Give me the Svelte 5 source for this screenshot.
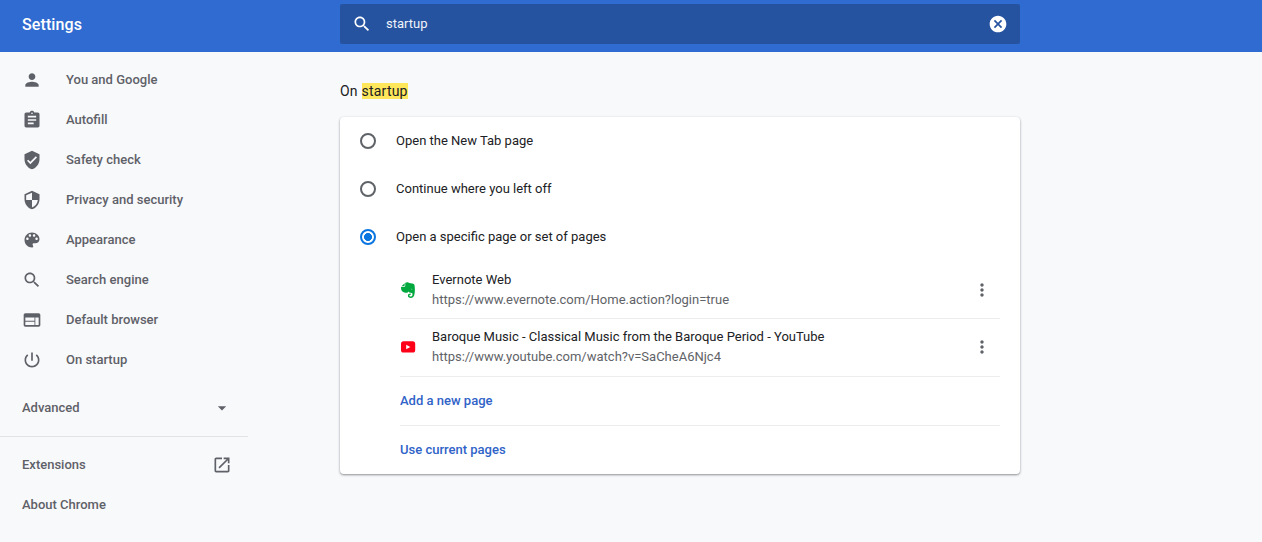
<script>
  const menu = [
    { label: 'You and Google', d: 'M12 12c2.21 0 4-1.79 4-4s-1.79-4-4-4-4 1.79-4 4 1.79 4 4 4zm0 2c-2.67 0-8 1.34-8 4v2h16v-2c0-2.66-5.33-4-8-4z' },
    { label: 'Autofill', d: 'M19 3h-4.18C14.4 1.84 13.3 1 12 1c-1.3 0-2.4.84-2.82 2H5c-1.1 0-2 .9-2 2v14c0 1.1.9 2 2 2h14c1.1 0 2-.9 2-2V5c0-1.100-.9-2-2-2zm-7 0c.55 0 1 .45 1 1s-.45 1-1 1-1-.45-1-1 .45-1 1-1zm2 14H7v-2h7v2zm3-4H7v-2h10v2zm0-4H7V7h10v2z' },
    { label: 'Safety check', d: 'M12 1L3 5v6c0 5.550 3.840 10.740 9 12 5.160-1.260 9-6.450 9-12V5l-9-4zm-2 16l-4-4 1.410-1.410L10 14.170l6.590-6.590L18 9l-8 8z' },
    { label: 'Privacy and security', d: 'M12 1L3 5v6c0 5.550 3.840 10.740 9 12 5.160-1.260 9-6.450 9-12V5l-9-4zm0 10.990h7c-.53 4.120-3.280 7.790-7 8.940V12H5V6.300l7-3.110v8.800z' },
    { label: 'Appearance', d: 'M12 3c-4.970 0-9 4.030-9 9s4.030 9 9 9c.83 0 1.500-.67 1.500-1.500 0-.39-.15-.74-.39-1.010-.23-.26-.38-.61-.38-.99 0-.83.67-1.500 1.500-1.500H16c2.760 0 5-2.240 5-5 0-4.420-4.030-8-9-8zm-5.500 9c-.83 0-1.500-.67-1.500-1.500S5.670 9 6.500 9 8 9.670 8 10.500 7.330 12 6.500 12zm3-4C8.670 8 8 7.330 8 6.500S8.670 5 9.500 5s1.500.67 1.500 1.500S10.330 8 9.500 8zm5 0c-.83 0-1.500-.67-1.500-1.500S13.670 5 14.500 5s1.500.67 1.500 1.500S15.330 8 14.500 8zm3 4c-.83 0-1.500-.67-1.500-1.500S16.670 9 17.500 9s1.500.67 1.500 1.500-.67 1.500-1.500 1.500z' },
    { label: 'Search engine', d: 'M15.500 14h-.79l-.28-.27C15.410 12.590 16 11.110 16 9.500 16 5.910 13.090 3 9.500 3S3 5.910 3 9.500 5.910 16 9.500 16c1.610 0 3.090-.59 4.230-1.570l.27.28v.79l5 4.990L20.490 19l-4.990-5zm-6 0C7.010 14 5 11.990 5 9.500S7.010 5 9.500 5 14 7.010 14 9.500 11.990 14 9.500 14z' },
    { label: 'Default browser', d: 'M20 4H4c-1.100 0-1.990.9-1.990 2L2 18c0 1.100.9 2 2 2h16c1.100 0 2-.9 2-2V6c0-1.100-.9-2-2-2zm-5 14H4v-4h11v4zm0-5H4V9h11v4zm5 5h-4V9h4v9z' },
    { label: 'On startup', d: 'M13 3h-2v10h2V3zm4.830 2.170l-1.420 1.420C17.990 7.860 19 9.810 19 12c0 3.870-3.130 7-7 7s-7-3.130-7-7c0-2.190 1.010-4.140 2.580-5.420L6.170 5.170C4.230 6.820 3 9.260 3 12c0 4.970 4.030 9 9 9s9-4.030 9-9c0-2.740-1.230-5.180-3.170-6.830z' }
  ];
  const search = menu[5].d;
  const options = ['Open the New Tab page', 'Continue where you left off', 'Open a specific page or set of pages'];
  let selected = $state(2);
  let query = $state('startup');
  const pages = [
    { title: 'Evernote Web', url: 'https://www.evernote.com/Home.action?login=true', icon: 'evernote' },
    { title: 'Baroque Music - Classical Music from the Baroque Period - YouTube', url: 'https://www.youtube.com/watch?v=SaCheA6Njc4', icon: 'youtube' }
  ];
</script>

<div class="app">
  <header>
    <h1>Settings</h1>
    <div class="search">
      <svg class="icon" viewBox="0 0 24 24"><path d={search} /></svg>
      <input bind:value={query} aria-label="Search settings" />
      <button class="clear" aria-label="Clear search" onclick={() => (query = '')}>
        <svg class="icon" viewBox="0 0 24 24"><path d="M12 2C6.470 2 2 6.470 2 12s4.470 10 10 10 10-4.470 10-10S17.530 2 12 2zm5 13.590L15.590 17 12 13.410 8.410 17 7 15.590 10.590 12 7 8.410 8.410 7 12 10.590 15.590 7 17 8.410 13.410 12 17 15.590z" /></svg>
      </button>
    </div>
  </header>
  <div class="body">
    <nav>
      {#each menu as item}
        <div class="item">
          <svg class="icon" viewBox="0 0 24 24"><path d={item.d} /></svg>
          <span>{item.label}</span>
        </div>
      {/each}
      <div class="item wide advanced">
        <span>Advanced</span>
        <svg class="icon" viewBox="0 0 24 24"><path d="M7 10l5 5 5-5z" /></svg>
      </div>
      <div class="rule"></div>
      <div class="item wide">
        <span>Extensions</span>
        <svg class="icon" viewBox="0 0 24 24"><path d="M19 19H5V5h7V3H5c-1.110 0-2 .9-2 2v14c0 1.100.89 2 2 2h14c1.100 0 2-.9 2-2v-7h-2v7zM14 3v2h3.590l-9.830 9.830 1.410 1.410L19 6.410V10h2V3h-7z" /></svg>
      </div>
      <div class="item wide"><span>About Chrome</span></div>
    </nav>
    <main>
      <h2>On <mark>startup</mark></h2>
      <section class="card">
        {#each options as option, i}
          <label class="option">
            <input type="radio" name="startup" value={i} bind:group={selected} />
            <span>{option}</span>
          </label>
        {/each}
        <div class="pages">
          {#each pages as page}
            <div class="page">
              {#if page.icon === 'evernote'}
                <svg class="favicon" viewBox="0 0 16 16">
                  <path fill="#00a83d" d="M4.700 1.200V3.300Q4.700 4 4 4H1.700Z" />
                  <path fill="#00a83d" d="M5.200.9C6 .1 8.200-.1 9.300.9l2.900.5c1.300.2 2.100.6 2.300 1.900.5 3 .5 6.200-.1 9.100-.4 2.300-1.600 3.500-3.700 3.500-1.700 0-2.800-.8-2.800-2.200 0-1.500 1-2.300 2.900-2.300v1.300c-.9 0-1.400.3-1.400.9 0 .7.600 1 1.400 1 1.200 0 1.700-.8 1.700-2.500 0-.8-.5-1.100-1.600-1.300l-1.700-.4-.5-.8c-.7 1.100-1.800 1.400-3.600 1.100C2.100 10.300 1 8.300 1 5.500c0-.5.200-.8.700-.8h2.300c.9 0 1.300-.5 1.300-1.300z" />
                  <path fill="#fff" d="M10.900 7.300c.3-.8 1.300-.7 1.500.2-.5-.2-1-.3-1.500-.2z" />
                </svg>
              {:else}
                <svg class="favicon" viewBox="0 0 16 16">
                  <rect x="1" y="2.300" width="14.200" height="11.200" rx="2.600" fill="#ff0019" />
                  <path fill="#fff" d="M6.200 5.800v4.400L10.300 8z" />
                </svg>
              {/if}
              <div class="text">
                <div class="title">{page.title}</div>
                <div class="url">{page.url}</div>
              </div>
              <button class="more" aria-label="More actions">
                <svg class="icon" viewBox="0 0 24 24"><path d="M12 8c1.100 0 2-.9 2-2s-.9-2-2-2-2 .9-2 2 .9 2 2 2zm0 2c-1.100 0-2 .9-2 2s.9 2 2 2 2-.9 2-2-.9-2-2-2zm0 6c-1.100 0-2 .9-2 2s.9 2 2 2 2-.9 2-2-.9-2-2-2z" /></svg>
              </button>
            </div>
          {/each}
          <div class="action">Add a new page</div>
          <div class="action">Use current pages</div>
        </div>
      </section>
    </main>
  </div>
</div>

<style>
  :global(body) { margin: 0; background: #f8f9fb; }
  .app { height: 542px; overflow: hidden; font: 13px/20px Roboto, sans-serif; color: #202124; background: #f8f9fb; }
  .app * { box-sizing: border-box; }
  .icon { width: 20px; height: 20px; fill: currentColor; display: block; flex: none; }
  button { border: 0; padding: 0; background: none; color: inherit; }
  header { height: 52px; background: #2f6bd0; color: #fff; display: flex; align-items: flex-start; }
  h1 { width: 340px; margin: 0; padding: 13px 22px 11px; font-size: 16px; line-height: 24px; font-weight: 500; letter-spacing: .1px; }
  .search { width: 680px; height: 40px; margin-top: 4px; padding: 0 12px; background: #2553a0; border-radius: 2px; display: flex; align-items: center; }
  .search input { flex: 1; margin-left: 14px; padding: 0; border: 0; outline: 0; background: none; color: #f1f4fa; font: 13px/20px Roboto, sans-serif; letter-spacing: 0; }
  .body { display: flex; }
  nav { width: 340px; padding-top: 8px; color: #5f6168; font-weight: 500; }
  .item { height: 40px; width: 254px; padding: 0 22px; display: flex; align-items: center; gap: 24px; }
  .wide { justify-content: space-between; }
  .advanced { margin-top: 8px; }
  .rule { width: 248px; height: 1px; margin: 8px 0; background: #e1e3e6; }
  main { width: 680px; }
  h2 { margin: 0; padding-top: 29px; height: 65px; font-size: 14px; line-height: 20px; font-weight: 400; letter-spacing: .22px; }
  mark { background: #ffe75b; color: inherit; }
  .card { height: 357px; background: #fff; border-radius: 4px; box-shadow: 0 1px 2px rgba(60, 64, 67, .4), 0 1px 3px rgba(60, 64, 67, .22); }
  .option { height: 48px; padding: 0 20px; display: flex; align-items: center; gap: 20px; }
  .option input { appearance: none; width: 16px; height: 16px; margin: 0; border: 2px solid #5f6368; border-radius: 50%; flex: none; }
  .option input:checked { border-color: #0b76e0; background: radial-gradient(circle, #0b76e0 3.700px, transparent 4.300px); }
  .pages { margin: 0 20px 0 60px; }
  .page { height: 58px; border-bottom: 1px solid #ececee; display: flex; align-items: center; }
  .page + .page { padding-bottom: 2px; }
  .favicon { width: 16px; height: 16px; flex: none; }
  .text { flex: 1; margin-left: 16px; }
  .url { color: #5f6368; }
  .more { margin-right: 8px; color: #5f6368; }
  .action { height: 49px; line-height: 48px; color: #3063c8; font-weight: 500; }
  .action:not(:last-child) { border-bottom: 1px solid #ececee; }
</style>
